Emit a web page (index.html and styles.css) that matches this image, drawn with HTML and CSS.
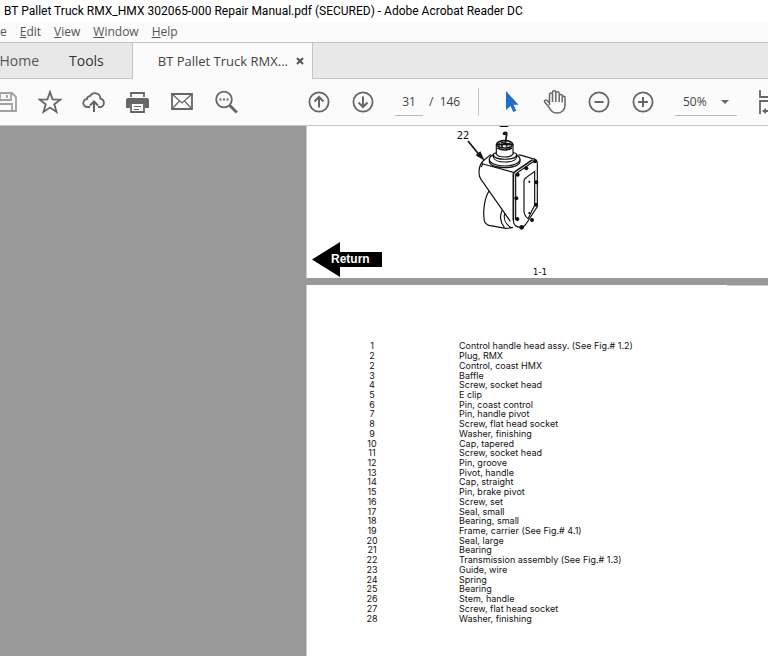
FILE: index.html
```html
<!DOCTYPE html>
<html lang="en">
<head>
    <meta charset="UTF-8">
    <title>BT Pallet Truck RMX_HMX 302065-000 Repair Manual.pdf</title>
    <meta name="viewport" content="width=device-width">
    <link rel="stylesheet" href="styles.css">
</head>
<body>
    <header class="titlebar">
        <h1>BT Pallet Truck RMX_HMX 302065-000 Repair Manual.pdf (SECURED) - Adobe Acrobat Reader DC</h1>
    </header>

    <nav class="menubar">
        <a href="#">e</a>
        <a href="#"><u>E</u>dit</a>
        <a href="#"><u>V</u>iew</a>
        <a href="#"><u>W</u>indow</a>
        <a href="#"><u>H</u>elp</a>
    </nav>

    <div class="tabs">
        <a class="tab tab-home" href="#">Home</a>
        <a class="tab tab-tools" href="#">Tools</a>
        <div class="tab tab-file">
            <a href="#">BT Pallet Truck RMX...</a>
            <button class="close" aria-label="Close tab">
                <svg viewBox="0 0 8 8"><path d="M1 1l6 6M7 1l-6 6" /></svg>
            </button>
        </div>
    </div>

    <div class="toolbar">
        <div class="tools tools-file">
            <button class="tool faded" aria-label="Save">
                <svg viewBox="0 0 24 24"><path d="M2 3h16l4 4v14h-20zM6 3v7h11v-7M13 5v3M5 21v-7h13v7" /></svg>
            </button>
            <button class="tool" aria-label="Star">
                <svg viewBox="0 0 24 24"><path d="M12 2l2.600 7.300 7.900.200-6.200 4.800 2.200 7.600-6.500-4.400-6.500 4.400 2.200-7.600-6.200-4.800 7.900-.200z" /></svg>
            </button>
            <button class="tool" aria-label="Upload">
                <svg viewBox="0 0 24 24"><path d="M8 17h-2.500a4 4 0 0 1-.500-8 3.200 3.200 0 0 1 3-2.800 5.500 5.500 0 0 1 10.400 2.500 4.300 4.300 0 0 1 .600 8.300h-3" /><path class="thick" d="M12 22v-10M8 15.500l4-4 4 4" /></svg>
            </button>
            <button class="tool" aria-label="Print">
                <svg viewBox="0 0 24 24"><path d="M5 7v-4h13v4" /><path class="solid" d="M2 8h19a2 2 0 0 1 2 2v8h-4v-4h-15v4h-4v-8a2 2 0 0 1 2-2z" /><path d="M5 13v9h13v-9" /><path class="thin" d="M8 16.500h7M8 19.500h5" /></svg>
            </button>
            <button class="tool" aria-label="Mail">
                <svg viewBox="0 0 24 24"><path d="M2 4h20v15h-20z" /><path class="thin" d="M2 4l10 9 10-9M2 19l7.500-8M22 19l-7.500-8" /></svg>
            </button>
            <button class="tool" aria-label="Find">
                <svg viewBox="0 0 24 24"><circle cx="10" cy="9.500" r="7.800" /><path class="heavy" d="M15.800 15.500l7 7" /><path class="solid" d="M5.500 8.500h2v2h-2zM9 8.500h2v2h-2zM12.500 8.500h2v2h-2z" /></svg>
            </button>
        </div>
        <div class="tools tools-page">
            <button class="tool" aria-label="Previous page">
                <svg viewBox="0 0 24 24"><circle cx="12" cy="12" r="9.600" /><path class="thick" d="M12 17.500v-10.500M7.500 11.500l4.500-4.500 4.500 4.500" /></svg>
            </button>
            <button class="tool" aria-label="Next page">
                <svg viewBox="0 0 24 24"><circle cx="12" cy="12" r="9.600" /><path class="thick" d="M12 6.500v10.500M7.500 12.500l4.500 4.500 4.500-4.500" /></svg>
            </button>
        </div>
        <input class="page-number" type="text" value="31" aria-label="Page number">
        <span class="page-total">/&nbsp; 146</span>
        <div class="tools tools-view">
            <button class="tool" aria-label="Select">
                <svg viewBox="0 0 24 24"><path class="pointer" d="M7 1v19l4.500-4 2.800 6 3-1.300-2.800-6h5z" /></svg>
            </button>
            <button class="tool" aria-label="Pan">
                <svg viewBox="0 0 24 24"><path class="hand" d="M6.500 15v-10.500a1.500 1.500 0 0 1 3 0v7.500M9.500 7v-4.500a1.600 1.600 0 0 1 3.300 0v9.500M12.800 3.500a1.600 1.600 0 0 1 3.400 0v8.500M16.200 6.500a1.600 1.600 0 0 1 3.300-.500c.500 0 2.500.100 2.500 1.500v8c0 4.500-3.500 7.500-8 7.500-5 0-6.500-3-8.500-6.500l-3.800-4.500c-1-1.500 1-2.600 2.200-1.700l3.100 3.200M19.200 6.500v6" /></svg>
            </button>
            <button class="tool" aria-label="Zoom out">
                <svg viewBox="0 0 24 24"><circle cx="12" cy="12" r="9.600" /><path class="thick" d="M7.500 12h9" /></svg>
            </button>
            <button class="tool" aria-label="Zoom in">
                <svg viewBox="0 0 24 24"><circle cx="12" cy="12" r="9.600" /><path class="thick" d="M7 12h10M12 7v10" /></svg>
            </button>
        </div>
        <div class="zoom">
            <select aria-label="Zoom level">
                <option>50%</option>
                <option>75%</option>
                <option>100%</option>
            </select>
        </div>
        <button class="tool tool-fit" aria-label="Fit width">
            <svg viewBox="0 0 24 24"><path d="M1 0v7h22v-7M1 24v-13h22v13M4 21h16" /><path class="solid" d="M3 21l4-3v6z" /></svg>
        </button>
    </div>

    <main class="document">
        <section class="page page-figure">
            <svg class="figure" viewBox="30 18 540 348" role="img" aria-label="Transmission assembly">
                <path class="ink-fill" d="M176 18h32l-6 3h-20z" />
                <text x="50" y="57">22</text>
                <path class="leader" d="M84 63l34 42" />
                <path class="ink-fill" d="M134 122l-27-16 14-12z" />
                <!-- housing -->
                <path d="M153 103l-24 20c-8 9-12 22-12 34q0 14 6 21l88 126" />
                <path d="M129 132l91 25M236 104l42 12M129 129l-5 12" />
                <path class="bold" d="M220 300v-137q0-5 5-8l53-36" />
                <path d="M227 300v-135q0-4 4-6l46-32q3-2 6-2M278 116q14 2 14 14v130l-34 52q-6 10-16 10-22 0-22-22" />
                <path d="M252 182q2-8 8-10l24-18v102l-20 40q-12-10-12-24z" />
                <path class="bold" d="M268 182v6M268 276v6" />
                <!-- motor -->
                <path d="M148 212c-14 20-20 60-15 90q2 10 14 14l50 9q12 0 22-3M187 270c-8 14-8 36 6 52M194 280c-4 18 4 34 18 42" />
                <!-- flanges and connector -->
                <ellipse cx="194" cy="118" rx="46" ry="20" />
                <path d="M148 118v7c2 24 90 24 92 0v-7" />
                <path class="paper" d="M160 103c2-8 70-8 70 0v8c-4 20-66 20-70 0z" />
                <path d="M160 105c4 17 66 17 70 0" />
                <path class="paper" d="M169 74v28c6 12 44 12 50 0v-28z" />
                <ellipse class="bold" cx="194" cy="73" rx="24" ry="11" />
                <path class="bold" d="M190 39q12-6 10 5l-4 24M188 42l10 1M178 69v8M186 72v10M200 72v8M210 68v8M182 68l26 4M172 84q22 12 44 0" />
                <g class="bolts">
                    <circle cx="233" cy="164" r="6" /><circle cx="259" cy="145" r="6" />
                    <circle cx="285" cy="124" r="6" /><circle cx="289" cy="187" r="6" />
                    <circle cx="288" cy="254" r="6" /><circle cx="276" cy="300" r="6" />
                    <circle cx="245" cy="322" r="7" /><circle cx="232" cy="297" r="6" />
                    <circle cx="229" cy="235" r="6" />
                </g>
            </svg>
            <a class="return" href="#">Return</a>
            <span class="page-label">1-1</span>
        </section>

        <section class="page page-parts">
            <table class="parts">
                <tbody>
                    <tr><th scope="row">1</th><td>Control handle head assy. (See Fig.# 1.2)</td></tr>
                    <tr><th scope="row">2</th><td>Plug, RMX</td></tr>
                    <tr><th scope="row">2</th><td>Control, coast HMX</td></tr>
                    <tr><th scope="row">3</th><td>Baffle</td></tr>
                    <tr><th scope="row">4</th><td>Screw, socket head</td></tr>
                    <tr><th scope="row">5</th><td>E clip</td></tr>
                    <tr><th scope="row">6</th><td>Pin, coast control</td></tr>
                    <tr><th scope="row">7</th><td>Pin, handle pivot</td></tr>
                    <tr><th scope="row">8</th><td>Screw, flat head socket</td></tr>
                    <tr><th scope="row">9</th><td>Washer, finishing</td></tr>
                    <tr><th scope="row">10</th><td>Cap, tapered</td></tr>
                    <tr><th scope="row">11</th><td>Screw, socket head</td></tr>
                    <tr><th scope="row">12</th><td>Pin, groove</td></tr>
                    <tr><th scope="row">13</th><td>Pivot, handle</td></tr>
                    <tr><th scope="row">14</th><td>Cap, straight</td></tr>
                    <tr><th scope="row">15</th><td>Pin, brake pivot</td></tr>
                    <tr><th scope="row">16</th><td>Screw, set</td></tr>
                    <tr><th scope="row">17</th><td>Seal, small</td></tr>
                    <tr><th scope="row">18</th><td>Bearing, small</td></tr>
                    <tr><th scope="row">19</th><td>Frame, carrier (See Fig.# 4.1)</td></tr>
                    <tr><th scope="row">20</th><td>Seal, large</td></tr>
                    <tr><th scope="row">21</th><td>Bearing</td></tr>
                    <tr><th scope="row">22</th><td>Transmission assembly (See Fig.# 1.3)</td></tr>
                    <tr><th scope="row">23</th><td>Guide, wire</td></tr>
                    <tr><th scope="row">24</th><td>Spring</td></tr>
                    <tr><th scope="row">25</th><td>Bearing</td></tr>
                    <tr><th scope="row">26</th><td>Stem, handle</td></tr>
                    <tr><th scope="row">27</th><td>Screw, flat head socket</td></tr>
                    <tr><th scope="row">28</th><td>Washer, finishing</td></tr>
                </tbody>
            </table>
        </section>
    </main>
</body>
</html>
```

FILE: styles.css
```css
*,
*::after,
*::before{
    box-sizing: border-box;
}
body{
    margin: 0;
    min-height: 100vh;
    display: flex;
    flex-direction: column;
    overflow: hidden;
    font: 12px/16px "Open Sans", sans-serif;
    color: #444;
    background-color: #fbfbfb;
}
a{
    color: inherit;
    text-decoration: none;
}
button{
    border: none;
    padding: 0;
    background: none;
    cursor: pointer;
}

/* title and menu */
.titlebar{
    height: 22px;
    padding: 3px 4px;
    background-color: #fff;
}
.titlebar h1{
    margin: 0;
    font: 12px/16px Roboto, sans-serif;
    color: #000;
    white-space: nowrap;
}
.menubar{
    display: flex;
    gap: 13px;
    height: 20px;
    padding: 2px 0;
    color: #555;
}

/* tabs */
.tabs{
    display: flex;
    height: 37px;
    border-top: 1px solid #c4c4c4;
    border-bottom: 1px solid #c4c4c4;
    background-color: #e8e8e8;
}
.tab{
    display: flex;
    align-items: center;
    font-size: 14px;
}
.tab-home{
    justify-content: flex-end;
    width: 39px;
    color: #555;
}
.tab-tools{
    padding: 0 28px 0 30px;
    color: #333;
}
.tab-file{
    gap: 8px;
    height: 36px;
    padding: 0 8px 0 25px;
    border-left: 1px solid #c4c4c4;
    border-right: 1px solid #c4c4c4;
    font-size: 13px;
    background-color: #fbfbfb;
}
.close{
    display: flex;
}
.close svg{
    width: 8px;
    height: 8px;
    stroke: #555;
    stroke-width: 2;
}

/* toolbar */
.toolbar{
    display: flex;
    align-items: center;
    height: 47px;
    border-bottom: 1px solid #c4c4c4;
}
.toolbar > *{
    flex: none;
}
.tools{
    display: flex;
}
.tools-file{
    margin-left: -16px;
    margin-right: 49px;
}
.tools-page,
.tools-view{
    margin-right: 10px;
}
.tool{
    display: flex;
    justify-content: center;
    width: 44px;
}
.tool svg{
    width: 24px;
    height: 24px;
    fill: none;
    stroke: #666;
    stroke-width: 1.8;
}
.faded{
    opacity: 0.6;
}
.tool .thick{
    stroke-width: 2;
}
.tool .heavy{
    stroke-width: 3;
}
.tool .thin{
    stroke-width: 1.2;
}
.tool .hand{
    stroke-width: 1.5;
}
.tool .solid{
    fill: #666;
    stroke: none;
}
.tool .pointer{
    fill: #1f6fc9;
    stroke: none;
}
.page-number,
.zoom select{
    height: 28px;
    padding: 0;
    border: none;
    border-bottom: 1px solid #bbb;
    border-radius: 0;
    background: none;
    font: inherit;
    color: #444;
}
.page-number{
    width: 28px;
    text-align: center;
}
.page-total{
    width: 56px;
    height: 28px;
    margin-right: 10px;
    padding: 6px 0 6px 6px;
    border-right: 1px solid #c4c4c4;
    white-space: nowrap;
}
.zoom{
    display: flex;
    align-items: center;
    margin-right: 22px;
}
.zoom select{
    appearance: none;
    width: 62px;
    padding-left: 8px;
}
.zoom::after{
    content: "";
    width: 8px;
    margin-left: -16px;
    margin-right: 8px;
    border: 4px solid transparent;
    border-top-color: #666;
    border-bottom: none;
    pointer-events: none;
}
.tool-fit{
    width: 24px;
}

/* document pages */
.document{
    flex: 1;
    display: flex;
    flex-direction: column;
    gap: 7px;
    padding-left: 306px;
    background-color: #999;
}
.page{
    border-left: 1px solid #ccc;
    background-color: #fff;
    color: #111;
}
.page-figure{
    display: grid;
    grid-template-columns: 138px 180px;
    grid-template-rows: 116px 36px;
    padding-left: 5px;
}
.figure{
    grid-column: 2;
    width: 180px;
    height: 116px;
    fill: none;
    stroke: #111;
    stroke-width: 3.5;
}
.figure text{
    font: 30px "DejaVu Sans", sans-serif;
    fill: #111;
    stroke: none;
}
.figure .leader,
.figure .bold{
    stroke-width: 5;
}
.figure .ink-fill,
.figure .bolts{
    fill: #111;
    stroke: none;
}
.figure .paper{
    fill: #fff;
}
.return{
    width: 70px;
    height: 35px;
    padding-left: 19px;
    font: bold 12px/34px "Liberation Sans", sans-serif;
    color: #fff;
    background-color: #000;
    clip-path: polygon(0 50%, 28px 0, 28px 10px, 100% 10px, 100% 25px, 28px 25px, 28px 100%);
}
.page-label{
    align-self: end;
    text-align: center;
    font: 9px/12px "DejaVu Sans", sans-serif;
}
.page-parts{
    flex: 1;
    padding: 56px 0 32px 55px;
    background: #fff linear-gradient(#ccc, #ccc) right top / 41px 1px no-repeat;
}
.parts{
    height: 282px;
    border-collapse: collapse;
    font: 9px/9px Inter, sans-serif;
}
.parts th,
.parts td{
    padding: 0;
    font-weight: 400;
    white-space: nowrap;
}
.parts th{
    width: 97px;
    padding-right: 77px;
    text-align: center;
}
```
